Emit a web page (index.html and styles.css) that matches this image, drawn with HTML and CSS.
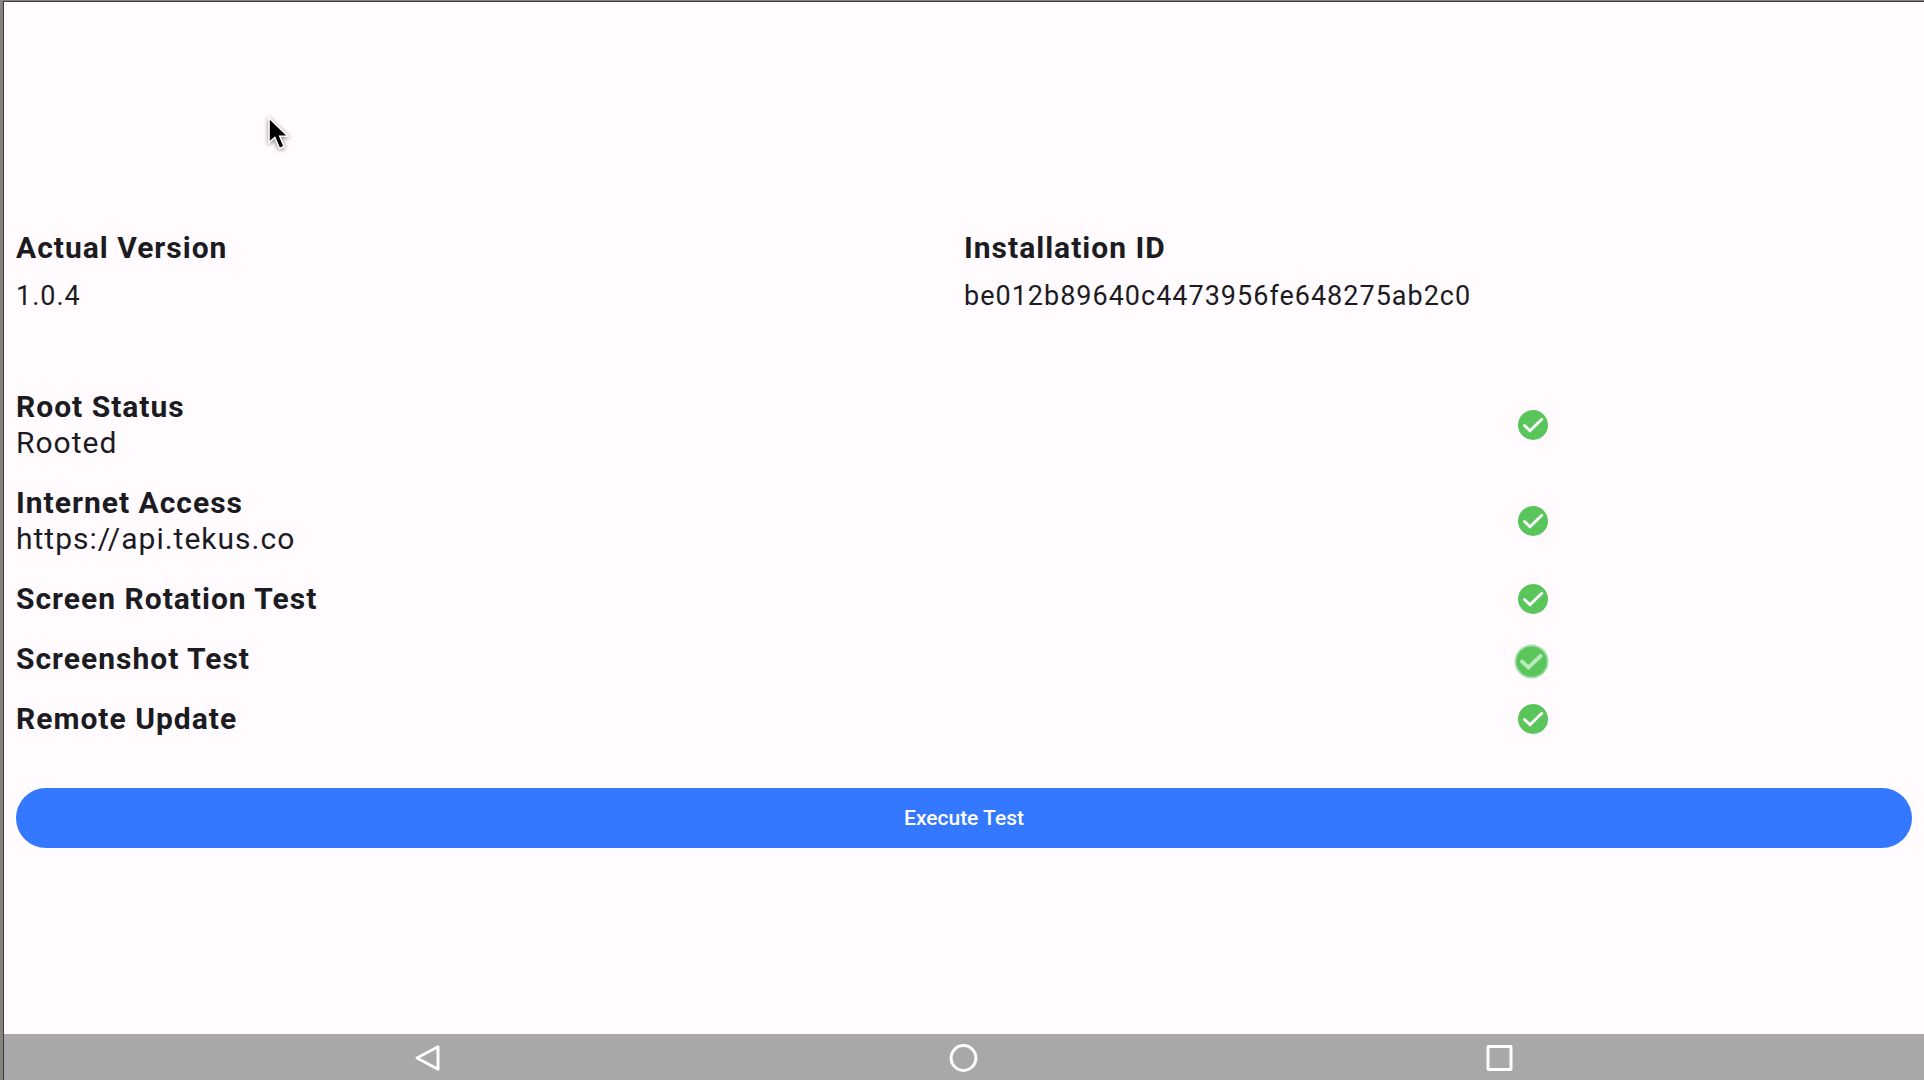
FILE: index.html
```
<!DOCTYPE html>
<html lang="en">
<head>
  <meta charset="UTF-8">
  <meta name="viewport" content="width=device-width, initial-scale=1.0">
  <title>Device Test</title>
  <link rel="stylesheet" href="styles.css">
</head>
<body>
<svg class="defs" aria-hidden="true">
  <symbol id="check" viewBox="0 0 30 30">
    <circle cx="15" cy="15" r="15" fill="#5ac55a"/>
    <path d="M6.5 15.5 L12 20.8 L23.8 9.2" fill="none" stroke="#fff" stroke-width="2.8" stroke-linecap="round"/>
  </symbol>
</svg>

<div class="screen">
  <main>
    <dl class="info">
      <div>
        <dt>Actual Version</dt>
        <dd>1.0.4</dd>
      </div>
      <div>
        <dt>Installation ID</dt>
        <dd>be012b89640c4473956fe648275ab2c0</dd>
      </div>
    </dl>

    <ul class="tests">
      <li>
        <div>
          <h2>Root Status</h2>
          <p>Rooted</p>
        </div>
        <svg class="check" role="img" aria-label="Passed"><use href="#check"/></svg>
      </li>
      <li>
        <div>
          <h2>Internet Access</h2>
          <p>https://api.tekus.co</p>
        </div>
        <svg class="check" role="img" aria-label="Passed"><use href="#check"/></svg>
      </li>
      <li>
        <h2>Screen Rotation Test</h2>
        <svg class="check" role="img" aria-label="Passed"><use href="#check"/></svg>
      </li>
      <li>
        <h2>Screenshot Test</h2>
        <!-- check still fading in -->
        <svg class="check" role="img" aria-label="Passed" viewBox="0 0 30 30">
          <circle cx="13.6" cy="17.6" r="17" fill="#a5dfab"/>
          <circle cx="13.6" cy="17.6" r="15.2" fill="#5ac55a"/>
          <path d="M4 17.5 L10.5 23.5 L22.6 12" fill="none" stroke="#b9eabc" stroke-width="3.8" stroke-linecap="round"/>
        </svg>
      </li>
      <li>
        <h2>Remote Update</h2>
        <svg class="check" role="img" aria-label="Passed"><use href="#check"/></svg>
      </li>
    </ul>

    <button class="execute">Execute Test</button>
  </main>

  <nav class="navbar">
    <button aria-label="Back">
      <svg viewBox="0 0 32 32"><path d="M5 16 L26 4.8 V27.2 Z" fill="none" stroke="#fff" stroke-width="3" stroke-linejoin="round"/></svg>
    </button>
    <button aria-label="Home">
      <svg viewBox="0 0 32 32"><circle cx="15.5" cy="16" r="12.4" fill="none" stroke="#fff" stroke-width="3"/></svg>
    </button>
    <button aria-label="Recent apps">
      <svg viewBox="0 0 32 32"><rect x="4" y="4.5" width="23" height="23" rx="0.5" fill="none" stroke="#fff" stroke-width="3"/></svg>
    </button>
  </nav>
</div>

<svg class="cursor" viewBox="0 0 24 36" aria-hidden="true">
  <path d="M2 2 V26.5 L7.8 21.5 L12.5 32.5 L17.2 30.5 L12.8 20.2 H21 Z" fill="#000" stroke="#fff" stroke-width="1.6"/>
</svg>
</body>
</html>
```

FILE: styles.css
```
* {
  box-sizing: border-box;
}
body {
  margin: 0;
  font-family: Roboto, sans-serif;
  background-color: #848380;
  color: #1c1b1f;
}
.defs {
  display: none;
}

/* device screen with the window frame on the top and left */
.screen {
  display: flex;
  flex-direction: column;
  min-height: calc(100vh - 1px);
  margin: 1px 0 0 3px;
  border-top: 1px solid #3c3b38;
  border-left: 1px solid #3c3b38;
  background-color: #fffbff;
}
main {
  flex: 1;
  padding: 228px 12px 0;
}

.info {
  display: grid;
  grid-template-columns: 1fr 1fr;
  margin: 0 0 75px;
  letter-spacing: 1px;
}
.info dt {
  font-size: 30px;
  font-weight: bold;
  line-height: 36px;
}
.info dd {
  margin: 12px 0 0;
  font-size: 27px;
  line-height: 36px;
}

.tests {
  display: flex;
  flex-direction: column;
  gap: 24px;
  margin: 0;
  padding: 0;
  list-style: none;
  letter-spacing: 1px;
}
.tests li {
  display: grid;
  grid-template-columns: 3fr 2fr;
  align-items: center;
}
.tests h2,
.tests p {
  margin: 0;
  font-size: 30px;
  line-height: 36px;
}
.check {
  width: 30px;
  height: 30px;
  justify-self: center;
  overflow: visible;
}

.execute {
  display: block;
  width: 100%;
  height: 60px;
  margin-top: 51px;
  border: none;
  border-radius: 30px;
  background-color: #3478ff;
  color: #fff;
  font-family: inherit;
  font-size: 21px;
  font-weight: 500;
  cursor: pointer;
}

.navbar {
  display: flex;
  height: 46px;
  padding: 0 156px;
  background-color: #a9a7a9;
}
.navbar button {
  flex: 1;
  padding: 2px 0 0;
  border: none;
  background: none;
  cursor: pointer;
}
.navbar svg {
  display: block;
  width: 32px;
  height: 32px;
  margin: 0 auto;
}

.cursor {
  position: absolute;
  top: 116px;
  left: 267px;
  width: 24px;
  height: 36px;
  filter: drop-shadow(0 1px 2px rgba(0, 0, 0, 0.5));
}
```
